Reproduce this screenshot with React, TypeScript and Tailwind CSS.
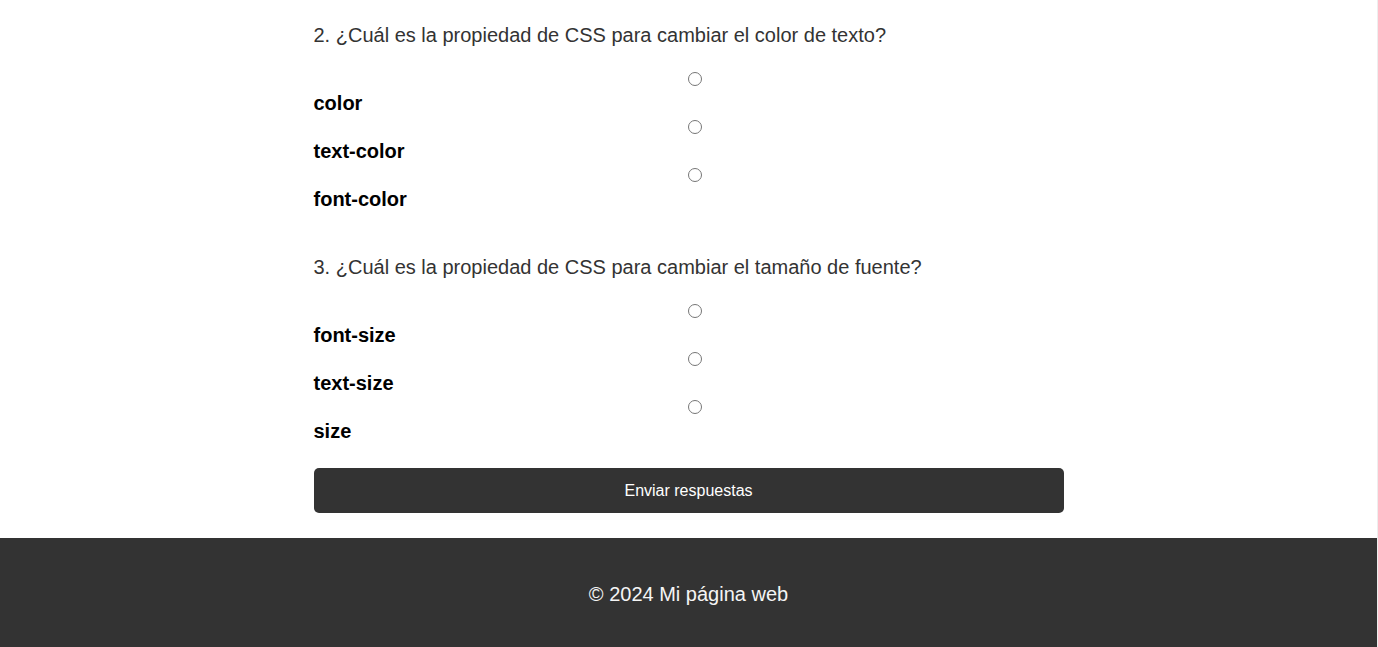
import React from 'react';

const questions = [
  {
    id: 'q2',
    title: '2. ¿Cuál es la propiedad de CSS para cambiar el color de texto?',
    options: ['color', 'text-color', 'font-color'],
  },
  {
    id: 'q3',
    title: '3. ¿Cuál es la propiedad de CSS para cambiar el tamaño de fuente?',
    options: ['font-size', 'text-size', 'size'],
  },
];

function Question({ id, title, options }: { id: string; title: string; options: string[] }) {
  return (
    <div>
      <p className="h-[23px] text-[20px] leading-[23px] text-[#333]">{title}</p>
      <div className="mt-[21px]">
        {options.map((opt) => (
          <label key={opt} className="block h-[48px] cursor-pointer">
            <span className="flex h-[23px] items-center justify-center pb-[2px] pl-[13px]">
              <input type="radio" name={id} value={opt} className="m-0 h-[14px] w-[14px]" />
            </span>
            <span className="block h-[25px] text-[20px] font-bold leading-[25px] text-black">{opt}</span>
          </label>
        ))}
      </div>
    </div>
  );
}

export default function App() {
  return (
    <div className="h-[647px] overflow-hidden bg-[#eeeeee] pr-px" style={{ fontFamily: '"Liberation Sans", Arial, sans-serif' }}>
      <div className="bg-white">
        <main className="mx-auto w-[750px] pt-[24px]">
          <form onSubmit={(e) => e.preventDefault()}>
            <div className="flex flex-col gap-[44px]">
              {questions.map((q) => (
                <Question key={q.id} {...q} />
              ))}
            </div>
            <button
              type="submit"
              className="mt-[24px] h-[45px] w-full rounded-[5px] bg-[#333] text-[16px] text-white"
            >
              Enviar respuestas
            </button>
          </form>
          <div className="h-[25px]" />
        </main>
        <footer className="flex h-[109px] items-center justify-center bg-[#333] pt-[2px]">
          <p className="text-[20px] text-[#f5f5f5]">© 2024 Mi página web</p>
        </footer>
      </div>
    </div>
  );
}
